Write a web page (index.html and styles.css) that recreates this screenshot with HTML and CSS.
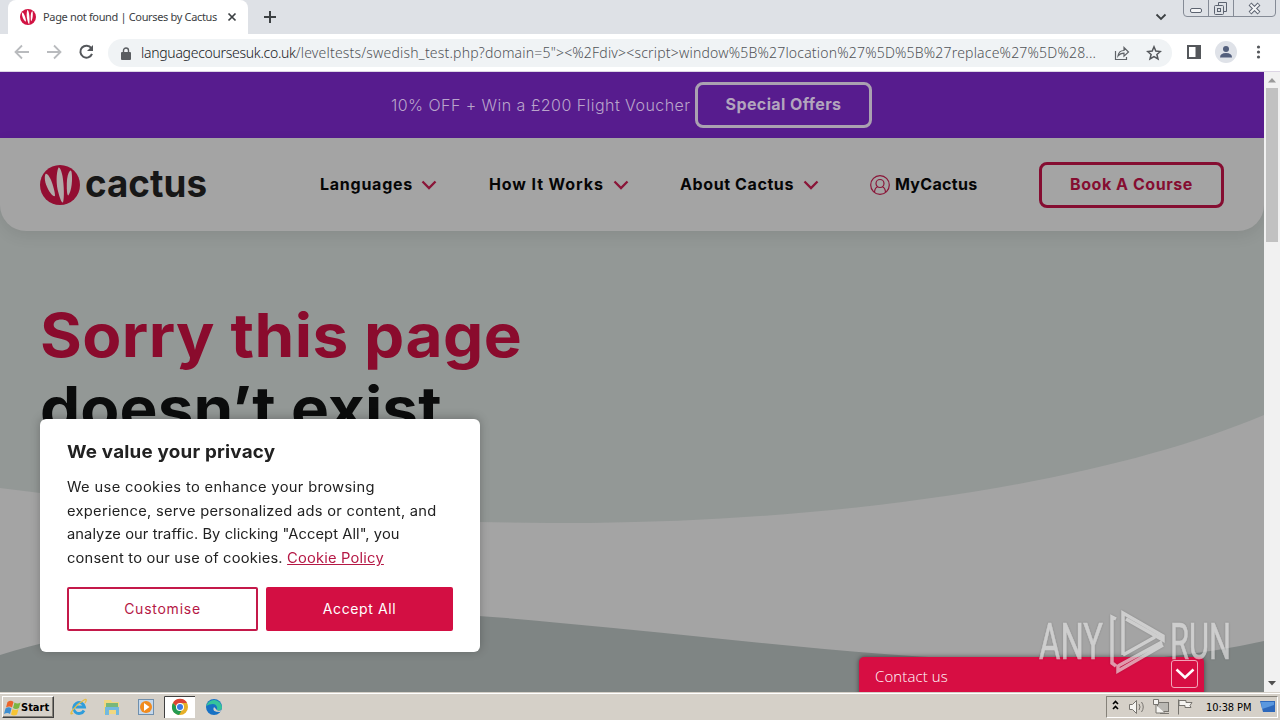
FILE: index.html
```html
<!DOCTYPE html>
<html lang="en">
<head>
<meta charset="utf-8">
<title>Page not found | Courses by Cactus</title>
<link rel="stylesheet" href="styles.css">
</head>
<body>
<svg class="defs" width="0" height="0" aria-hidden="true">
  <symbol id="cactus" viewBox="0 0 40 40">
    <circle class="disc" cx="20" cy="20" r="20"/>
    <g class="spines">
      <path d="M5.500 9C4 12 5 18 7.500 23C10 28 13 32 15 31C15 27 13 20 11 15C9 11 7 8 5.500 9Z"/>
      <path d="M18.500 2.500C16 8 16 20 18.500 28C20 33.500 21.500 38 23 37.500C24.500 33 24 20 22.500 11C21.500 6 20 2 18.500 2.500Z"/>
      <path d="M30.500 5.500C28 7 26.800 13 26.800 20C26.800 26 27 30 28.300 30.500C30.300 28 32 21 32 14C32 9 31.700 5.500 30.500 5.500Z"/>
    </g>
  </symbol>
  <symbol id="chev" viewBox="0 0 16 10"><path d="M1.500 1.500 8 8 14.500 1.500" fill="none" stroke="currentColor" stroke-width="2.300"/></symbol>
</svg>

<div class="tabstrip">
  <div class="tab">
    <svg class="favicon" width="16" height="16"><use href="#cactus"/></svg>
    <span class="tab-title">Page not found | Courses by Cactus</span>
    <svg class="tab-close" width="10" height="10"><path d="M1.500 1.500 8.500 8.500M8.500 1.500 1.500 8.500" stroke="#3c4043" stroke-width="1.700"/></svg>
  </div>
  <svg class="newtab" width="14" height="14"><path d="M7 1V13M1 7H13" stroke="#3c4043" stroke-width="2"/></svg>
  <svg class="tabsearch" width="12" height="8"><path d="M1.500 1.500 6 6 10.500 1.500" fill="none" stroke="#3c4043" stroke-width="1.800"/></svg>
  <svg class="winctl" width="94" height="18">
    <path d="M.5 0V13Q.5 16.500 4 16.500H89Q92.500 16.500 92.500 13V0M25.500 0V16M50.500 0V16" fill="none" stroke="#858b96"/>
    <g fill="none" stroke="#5c6370">
      <rect x="7.500" y="8.500" width="11" height="4" rx="1.500" fill="#f3f4f6"/>
      <path d="M35.500 5V2.500H43.500V11.500H41"/>
      <rect x="31.500" y="5.500" width="9" height="9" rx="1"/><rect x="34.500" y="8.500" width="3" height="3"/>
    </g>
    <path d="m67 4 9 9M76 4l-9 9" stroke="#5c6370" stroke-width="4"/>
    <path d="m67.500 4.500 8 8M75.500 4.500l-8 8" stroke="#f3f4f6" stroke-width="2"/>
  </svg>
</div>

<div class="toolbar">
  <svg width="108" height="37">
    <g fill="none" stroke="#b9bbbe" stroke-width="1.800">
      <path d="M29 18H16M22 11.500 15.500 18 22 24.500"/><path d="M47 18H60M54 11.500 60.500 18 54 24.500"/>
    </g>
    <path d="M91.300 14.200A6 6 0 1 0 92 19.800" fill="none" stroke="#54575b" stroke-width="2"/><path d="M93 11V17H87Z" fill="#54575b"/>
  </svg>
  <div class="omnibox">
    <svg width="10" height="13"><rect y="5" width="10" height="8" rx="1" fill="#5a5d61"/><path d="M2.500 6V3.500a2.500 2.500 0 0 1 5 0V6" fill="none" stroke="#5a5d61" stroke-width="1.400"/></svg>
    <div class="url"><span class="host">languagecoursesuk.co.uk</span><span class="path">/leveltests/swedish_test.php?domain=5"&gt;&lt;%2Fdiv&gt;&lt;script&gt;window%5B%27location%27%5D%5B%27replace%27%5D%28...</span></div>
    <svg class="share" width="16" height="16"><path d="M1.500 6V14.500H12.500V12M4 11C4.500 7 7 5.500 10 5.500V2.500L14.500 7 10 11.200V8.200C7.500 8.200 5.500 9 4 11Z" fill="none" stroke="#5f6368" stroke-width="1.200"/></svg>
    <svg class="star" width="16" height="16"><path d="m8 1.800 1.800 4.300 4.600.4-3.500 3 1.100 4.500L8 11.600 4 14l1.100-4.500-3.500-3 4.600-.4Z" fill="none" stroke="#54575b" stroke-width="1.500"/></svg>
  </div>
  <svg class="actions" width="88" height="37">
    <rect x="12" y="12" width="12" height="12" fill="none" stroke="#54575b" stroke-width="2"/><path d="M19.500 11H25v14h-5.500z" fill="#54575b"/>
    <circle cx="50" cy="18" r="11" fill="#dfe2e8"/><circle cx="50" cy="15" r="3" fill="#535f7c"/><path d="M44 23.500q0-4.500 6-4.500t6 4.500z" fill="#535f7c"/>
    <g fill="#54575b"><circle cx="82.500" cy="13" r="1.600"/><circle cx="82.500" cy="18" r="1.600"/><circle cx="82.500" cy="23" r="1.600"/></g>
  </svg>
</div>

<div class="viewport">
  <main class="page">
    <div class="promo"><span class="promo-text">10% OFF + Win a £200 Flight Voucher</span><a class="offers">Special Offers</a></div>
    <div class="below">
      <svg class="waves" width="1264" height="554" viewBox="0 138 1264 554">
        <rect y="138" width="1264" height="554" fill="#939896"/>
        <path d="M0 488C180 512 390 523 590 523C860 520 1110 480 1264 415V692H0Z" fill="#a4a4a4"/>
        <path d="M0 655C150 609 350 601 560 623C720 637 880 660 1060 662Q1170 662 1264 641V692H0Z" fill="#7f8584"/>
      </svg>
      <header class="header">
        <div class="logo"><svg class="mark" width="40" height="40"><use href="#cactus"/></svg>
          <svg class="wordmark" width="130" height="52"><text x="0" y="37.500" textLength="122" lengthAdjust="spacingAndGlyphs">cactus</text></svg></div>
        <nav class="nav">
          <a class="n1"><span>Languages</span><svg width="16" height="10"><use href="#chev"/></svg></a>
          <a class="n2"><span>How It Works</span><svg width="16" height="10"><use href="#chev"/></svg></a>
          <a class="n3"><span>About Cactus</span><svg width="16" height="10"><use href="#chev"/></svg></a>
          <a class="n4"><svg width="20" height="20"><g fill="none" stroke="currentColor" stroke-width="1.200"><circle cx="10" cy="10" r="9.300"/><circle cx="10" cy="8.500" r="4"/><path d="M4.500 17Q5 12.500 7.500 12M15.500 17Q15 12.500 12.500 12"/></g></svg><span>MyCactus</span></a>
        </nav>
        <a class="book">Book A Course</a>
      </header>
      <h1 class="title"><span class="red">Sorry this page</span><br><span class="dark">doesn’t exist</span></h1>
    </div>
    <section class="consent">
      <h2><span>We value your privacy</span></h2>
      <p><span class="l1">We use cookies to enhance your browsing</span><br><span class="l2">experience, serve personalized ads or content, and</span><br><span class="l3">analyze our traffic. By clicking "Accept All", you</span><br><span class="l4">consent to our use of cookies. </span><a>Cookie Policy</a></p>
      <div class="choices"><button class="customise">Customise</button><button class="accept">Accept All</button></div>
    </section>
    <div class="contact"><span>Contact us</span><i><svg width="20" height="12"><path d="M1.500 1.500 10 9.500 18.500 1.500" fill="none" stroke="#fff" stroke-width="2.500"/></svg></i></div>
    <svg class="watermark" width="206" height="76">
      <text x="1" y="50" textLength="64" lengthAdjust="spacingAndGlyphs">ANY</text>
      <text x="132" y="50" textLength="61" lengthAdjust="spacingAndGlyphs">RUN</text>
      <path d="M78 10 74 8V54L78 57M85 46V4L125 27V31L88 10M80 57 124 33M85 46 117 28M80 56V62L125 36"/>
    </svg>
  </main>
  <div class="scrollbar">
    <svg width="16" height="16"><path d="M4 10.500h8L8 6z" fill="#9a9a9a"/></svg>
    <div class="thumb"></div>
    <svg class="down" width="16" height="16"><path d="M4 6h8l-4 4.500z" fill="#505050"/></svg>
  </div>
</div>

<footer class="taskbar">
  <div class="start"><svg width="17" height="17"><path d="M3.500 3q3.500-2.500 6 0L8 8.500q-2.500-2-6 0z" fill="#eb642b"/><path d="M10.500 3.500q3 2 6 0L15 9q-3 2-6 0z" fill="#7bb642"/><path d="M1.500 9.500q3.500-2.500 6 0L6 15q-2.500-2-6 0z" fill="#3e8ed0"/><path d="M8.500 10q3 2 6 0L13 15.500q-3 2-6 0z" fill="#f6c434"/></svg><span>Start</span></div>
  <svg class="launch" width="180" height="24">
    <path d="M17 15.500A5.500 5.500 0 1 1 17.500 12H8.500" fill="none" stroke="#2f9ddb" stroke-width="2.800"/><path d="M6 18C0 22 8 10 17 5q4-2 1 3" fill="none" stroke="#e7bd43" stroke-width="1.300"/>
    <path d="M37 5h7l1 2h7v12H37z" fill="#f0d780"/><path d="M39 8h12v5H39z" fill="#79b779"/><path d="M38 12h14v8h-3v-5h-7v5h-4z" fill="#73b9df"/>
    <rect x="71.500" y="4.500" width="15" height="15" fill="#c5d8ec" stroke="#6f8fad"/><circle cx="79" cy="12" r="6" fill="#f18b1e"/><path d="m77 8 5.500 4-5.500 4z" fill="#fff"/>
    <rect x="97" y="1" width="31" height="22" fill="#fff"/><path d="M97.500 23V1.500H128" fill="none" stroke="#404040"/>
    <circle cx="113" cy="12" r="8" fill="#e6af28"/><path d="M106 8a8 8 0 0 1 14 0L113 8l-3 4z" fill="#dc4335"/><path d="M106 8a8 8 0 0 0 6 12l3.500-6-5-1z" fill="#249b51"/><circle cx="113" cy="12" r="4" fill="#fff"/><circle cx="113" cy="12" r="3" fill="#3a79e5"/>
    <circle cx="147" cy="12" r="8" fill="#1771c4"/><path d="M139.300 11a8 8 0 0 1 15.700 1q0 4-5 3.500 1-6-4-6.500-4 0-6.700 2z" fill="#35c39b"/><path d="M147 12q-3 5 6 5l2-2q-5 2-6-1z" fill="#d4cfc7"/>
  </svg>
  <div class="tray">
    <svg width="98" height="22">
      <path d="m6 8 2.500-2.500L11 8M6 13l2.500-2.500L11 13" fill="none" stroke="#000" stroke-width="1.600"/>
      <g fill="#f5f4f1" stroke="#77746f"><path d="M22.500 8.500h3l4-4v13l-4-4h-3z"/><path d="M32 8q2 3 0 6M34.500 6q3.500 5 0 10" fill="none"/>
      <rect x="50.500" y="6.500" width="11" height="9" fill="#bab8b3"/><path d="M46.500 3.500h5v5h-5zM49 9v8h9M53 17.500h9"/><path d="M71.500 3.500V18.500M72 4.500h7v2h6l-2 3 1 2h-6v-2h-6z"/></g>
    </svg>
    <span>10:38 PM</span>
    <svg width="17" height="14"><path d="M0 1h15v11H3z" fill="#2d68bb"/><path d="M1 2h13v3L2 9z" fill="#5a98df"/></svg>
  </div>
</footer>
</body>
</html>
```

FILE: styles.css
```css
* { box-sizing: border-box; }
body { margin: 0; width: 1280px; height: 720px; overflow: hidden; display: flex; flex-direction: column; font-family: Inter, sans-serif; color: #000; }
.defs { position: absolute; }
svg { display: block; flex: none; }
span, a { white-space: nowrap; }
.disc { fill: var(--disc, #d11342); }
.spines { fill: var(--spine, #fff); }

.tabstrip { height: 34px; flex: none; background: #dee1e6; display: flex; padding-left: 8px; }
.tab { width: 240px; background: #fff; border-radius: 8px 8px 0 0; display: flex; align-items: center; padding: 0 11px 0 12px; }
.tab-title { font: 11px "Noto Sans", sans-serif; color: #3c4043; margin: -1px 0 0 7px; width: 184px; letter-spacing: -.34px; }
.newtab { margin: 10px 0 0 15px; }
.tabsearch { margin: 13px 16px 0 auto; }
.winctl { margin-right: 3px; }

.toolbar { height: 38px; flex: none; background: #fff; border-bottom: 1px solid #dcd5e4; display: flex; }
.omnibox { width: 1064px; height: 28px; margin-top: 5px; border-radius: 14px; background: #f0f3f5; display: flex; align-items: center; padding-left: 13px; }
.url { width: 956px; margin: -1px 0 0 10px; font: 300 14px "Noto Sans", sans-serif; white-space: nowrap; color: #505458; }
.host { color: #15181b; letter-spacing: -.29px; }
.path { letter-spacing: .19px; }
.share { margin-left: 17px; }
.star { margin-left: 16px; }
.actions { margin-left: 4px; }

.viewport { height: 620px; flex: none; display: flex; }
.page { width: 1264px; position: relative; overflow: hidden; }
.promo { height: 66px; background: #571c8e; display: flex; align-items: center; padding-left: 391px; color: #b9a4cb; }
.promo-text { width: 304px; font-size: 16px; font-weight: 300; letter-spacing: .45px; }
.offers { width: 177px; height: 46px; border: 3px solid #aaa1b1; border-radius: 8px; font-size: 16px; font-weight: 700; letter-spacing: .4px; padding-bottom: 2px; display: flex; align-items: center; justify-content: center; color: #b2a5bd; }
.below { height: 554px; position: relative; }
.waves { position: absolute; left: 0; top: 0; }
.header { position: relative; height: 93px; background: #a4a4a4; border-radius: 0 0 26px 26px; box-shadow: 0 5px 15px rgba(0,0,0,.08); display: flex; align-items: center; padding: 0 40px; }
.logo { display: flex; align-items: center; width: 280px; --disc: #930e32; --spine: #b1aaa9; }
.wordmark { margin-left: 5px; }
.wordmark text { font: 700 38px Inter, sans-serif; fill: #171717; }
.nav { width: 719px; display: flex; font-size: 16px; font-weight: 700; }
.nav a { display: flex; align-items: center; color: #8a1538; }
.nav span { color: #060606; padding-bottom: 2px; }
.nav svg { margin-left: 9px; }
.n1 { width: 169px; } .n2 { width: 191px; } .n3 { width: 190px; }
.n1 span { width: 92px; letter-spacing: .75px; }
.n2 span { width: 115px; letter-spacing: .9px; }
.n3 span { width: 114px; letter-spacing: .6px; }
.nav .n4 svg { margin: 0 5px 0 0; }
.n4 span { letter-spacing: .3px; }
.book { width: 185px; height: 46px; border: 3px solid #850d31; border-radius: 8px; color: #850d31; font-size: 16px; font-weight: 700; letter-spacing: .55px; padding-bottom: 2px; display: flex; align-items: center; justify-content: center; }
.title { position: relative; margin: 68px 0 0 40px; font-size: 60px; line-height: 73px; font-weight: 700; }
.title span { display: inline-block; transform: scaleX(1.064); transform-origin: left; letter-spacing: .4px; }
.red { color: #8a0b2d; }
.title .dark { color: #0b0c0c; letter-spacing: .1px; }

.consent { position: absolute; left: 40px; top: 347px; width: 440px; height: 233px; background: #fff; border-radius: 6px; padding: 21px 27px; color: #212121; box-shadow: 0 -1px 10px rgba(0,0,0,.25); }
.consent h2 { margin: 0; font-size: 18px; line-height: 24px; letter-spacing: .2px; }
.consent h2 span { display: inline-block; transform: scaleX(1.045); transform-origin: left; }
.consent p { margin: 11px 0 0; font-size: 14px; line-height: 23.700px; white-space: nowrap; transform: scaleX(1.05); transform-origin: left; }
.l1 { letter-spacing: .33px; }
.l2 { letter-spacing: .25px; }
.l3 { letter-spacing: .06px; }
.l4 { letter-spacing: .17px; }
.consent p a { color: #b51845; text-decoration: underline; letter-spacing: .18px; }
.choices { display: flex; gap: 8px; margin-top: 17px; }
.choices button { height: 44px; font: 400 14px Inter, sans-serif; border: 2px solid #c4194a; border-radius: 2px; padding: 0; }
.customise { width: 191px; background: #fff; color: #b51845; letter-spacing: .75px; }
.choices .accept { width: 187px; background: #d30f43; border-color: #d30f43; color: #fff; letter-spacing: .6px; }

.contact { position: absolute; left: 859px; top: 585px; width: 345px; height: 40px; background: #d70e43; border-radius: 5px 5px 0 0; box-shadow: 0 0 5px rgba(0,0,0,.5); padding: 3px 6px 0 16px; display: flex; justify-content: space-between; color: #fff; font: 300 15px/32px "Open Sans", sans-serif; letter-spacing: .1px; }
.contact i { width: 27px; height: 28px; border: 1px solid #f3a5b9; border-radius: 3px; display: flex; align-items: center; justify-content: center; }
.watermark { position: absolute; left: 1038px; top: 537px; opacity: .65; filter: drop-shadow(0 0 1px rgba(0,0,0,.25)); }
.watermark text { font: 50px Roboto, sans-serif; fill: #e5e5e5; stroke: #e5e5e5; stroke-width: .6; }
.watermark path { fill: none; stroke: #e5e5e5; stroke-width: 3.500; }
.scrollbar { width: 16px; background: #f1f1f1; display: flex; flex-direction: column; }
.thumb { width: 12px; height: 154px; margin: 0 2px; background: #c1c1c1; }
.down { margin-top: auto; margin-bottom: 1px; }

.taskbar { height: 28px; flex: none; background: #d5d0c8; border-top: 1px solid #d5d0c8; box-shadow: inset 0 1px #fff; display: flex; align-items: center; padding: 1px 2px 0; }
.start { width: 52px; height: 22px; border: 1px solid; border-color: #fff #404040 #404040 #fff; box-shadow: inset -1px -1px #858179; display: flex; align-items: center; padding-left: 1px; font: 700 11px "DejaVu Sans Condensed", "DejaVu Sans", sans-serif; }
.launch { margin-left: 13px; }
.tray { margin-left: auto; width: 172px; height: 22px; border: 1px solid; border-color: #858179 #fff #fff #858179; display: flex; align-items: center; font: 11px "DejaVu Sans Condensed", "DejaVu Sans", sans-serif; }
.tray span { width: 55px; margin-left: 1px; letter-spacing: -.1px; }
```
